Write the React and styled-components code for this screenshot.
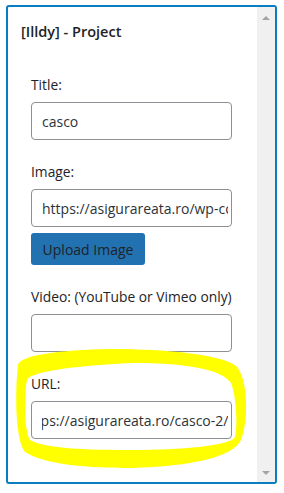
import { useEffect, useRef } from 'react';
import styled, { createGlobalStyle } from 'styled-components';

const GlobalStyle = createGlobalStyle`
    html, body {
        margin: 0;
        padding: 0;
        background: #fff;
    }
    body {
        font-family: "Open Sans", "Noto Sans", sans-serif;
        color: #1d2327;
    }
`;

const Page = styled.div`
    padding: 5px 7px 9px 6px;
    position: relative;
`;

const Panel = styled.div`
    height: 479px;
    box-sizing: border-box;
    border: 2px solid #0a7cc1;
    border-radius: 3px;
    display: flex;
    overflow: hidden;
    background: #fff;
`;

const Content = styled.div`
    flex: 1;
    min-width: 0;
    padding: 15px 0 0 13px;
`;

const Heading = styled.h3`
    margin: 0 0 33px;
    font-size: 14.5px;
    line-height: 20px;
    font-weight: 600;
    color: #1d2327;
`;

const Form = styled.div`
    padding-left: 10px;
    width: 201px;
    display: flex;
    flex-direction: column;
`;

const Field = styled.div`
    display: flex;
    flex-direction: column;
    margin-bottom: 22px;
`;

const Label = styled.label`
    font-size: 13.8px;
    line-height: 20px;
    margin-bottom: 7px;
    white-space: nowrap;
    color: #1d2327;
`;

const Input = styled.input`
    box-sizing: border-box;
    width: 201px;
    height: 38px;
    border: 1px solid #8c8f94;
    border-radius: 4px;
    padding: 0 3px 0 10px;
    font-family: "Open Sans", "Noto Sans", sans-serif;
    font-size: 14px;
    color: #2c3338;
    background: #fff;
    outline: none;
`;

const UploadButton = styled.button`
    align-self: flex-start;
    margin-top: 6px;
    height: 32px;
    width: 114px;
    border: none;
    border-radius: 3px;
    background: #2271b1;
    color: #1d2327;
    font-family: "Open Sans", "Noto Sans", sans-serif;
    font-size: 14px;
    padding: 0;
    cursor: pointer;
`;

const Scrollbar = styled.div`
    width: 18px;
    background: #f0f0f0;
    display: flex;
    flex-direction: column;
    justify-content: space-between;
    align-items: center;
    padding: 9px 0 7px;
`;

const Arrow = styled.div`
    width: 0;
    height: 0;
    border-left: 4px solid transparent;
    border-right: 4px solid transparent;
    ${props => (props.$down
        ? 'border-top: 4px solid #a3a3a3;'
        : 'border-bottom: 4px solid #a3a3a3;')}
`;

const Highlight = styled.svg`
    position: absolute;
    left: 0;
    top: 0;
    pointer-events: none;
`;

function App() {
    const urlRef = useRef(null);

    useEffect(() => {
        if (urlRef.current) urlRef.current.scrollLeft = urlRef.current.scrollWidth;
    }, []);

    return (
        <Page>
            <GlobalStyle />
            <Panel>
                <Content>
                    <Heading>[Illdy] - Project</Heading>
                    <Form>
                        <Field>
                            <Label>Title:</Label>
                            <Input defaultValue="casco" />
                        </Field>
                        <Field>
                            <Label>Image:</Label>
                            <Input defaultValue="https://asigurareata.ro/wp-content/uploads/casco.jpg" />
                            <UploadButton type="button">Upload Image</UploadButton>
                        </Field>
                        <Field>
                            <Label>Video: (YouTube or Vimeo only)</Label>
                            <Input defaultValue="" />
                        </Field>
                        <Field>
                            <Label>URL:</Label>
                            <Input ref={urlRef} defaultValue="https://asigurareata.ro/casco-2/" />
                        </Field>
                    </Form>
                </Content>
                <Scrollbar>
                    <Arrow />
                    <Arrow $down />
                </Scrollbar>
            </Panel>
            <Highlight width="284" height="493" viewBox="0 0 284 493">
                <path
                    fill="#ffff00"
                    fillRule="evenodd"
                    d="M 18 365 C 20 355, 60 350, 110 349 C 170 349, 222 355, 236 366 C 248 378, 249 420, 241 440 C 232 458, 190 466, 133 468 C 90 468, 45 465, 25 452 C 15 440, 15 390, 18 365 Z
                       M 27 380 C 30 372, 70 366, 133 363 C 190 363, 222 370, 231 383 C 236 395, 238 425, 235 437 C 230 446, 180 450, 133 450 C 90 450, 45 449, 30 440 C 24 430, 24 395, 27 380 Z"
                />
            </Highlight>
        </Page>
    );
}

export default App;
